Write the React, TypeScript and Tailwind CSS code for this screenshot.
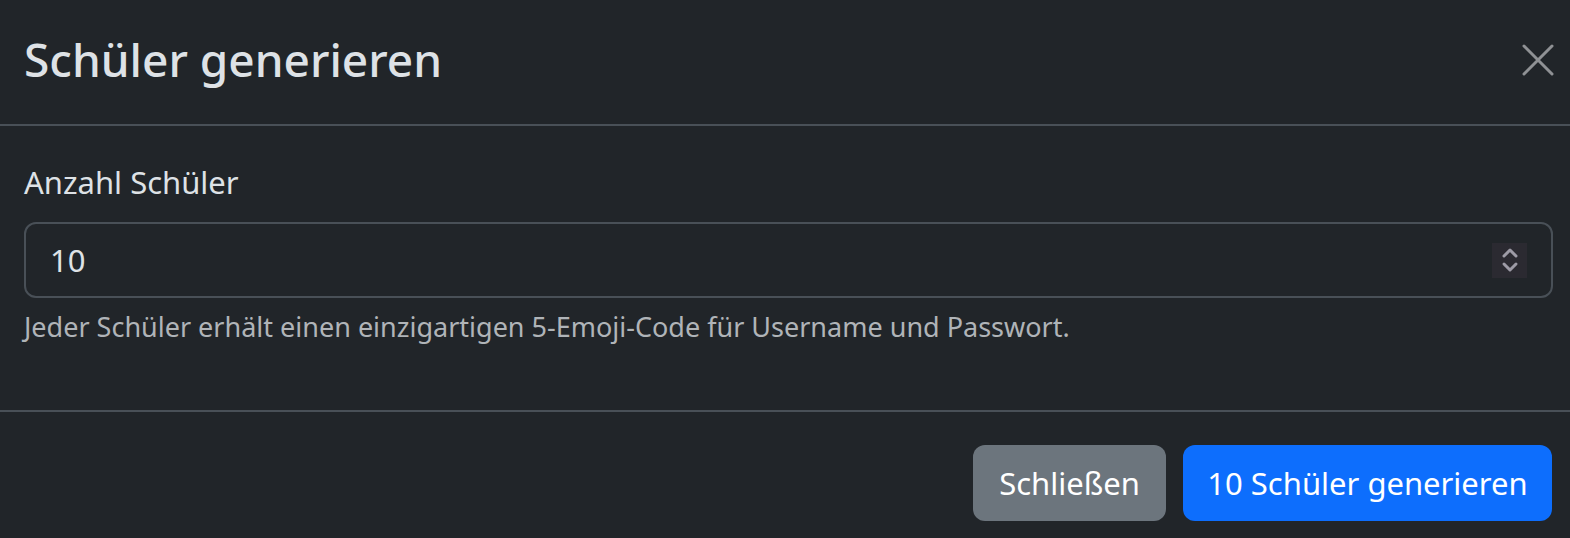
export default function App() {
  return (
    <div
      className="min-h-[538px] w-full bg-[#212529] text-[#dee2e6]"
      style={{ fontFamily: '"Noto Sans", "Open Sans", sans-serif' }}
    >
      {/* header */}
      <div className="flex h-[126px] items-center justify-between border-b-2 border-[#495057] pb-[6px] pl-[24px] pr-[16px]">
        <h1 className="text-[46px] leading-[60px] font-medium">Schüler generieren</h1>
        <button className="mt-[2px] flex h-[32px] w-[32px] items-center justify-center" aria-label="Close">
          <svg width="32" height="32" viewBox="0 0 32 32" fill="none" stroke="#8f9194" strokeWidth="3" strokeLinecap="round">
            <path d="M2 2L30 30M30 2L2 30" />
          </svg>
        </button>
      </div>

      {/* body */}
      <div className="pt-[32px] pb-[62px] pl-[24px] pr-[17px]">
        <label className="mb-[16px] block text-[31px] leading-[48px]">Anzahl Schüler</label>
        <div className="flex h-[76px] items-center rounded-[12px] border-2 border-[#495057] pl-[24px] pr-[24px]">
          <input
            type="text"
            readOnly
            value="10"
            className="min-w-0 flex-1 bg-transparent text-[31px] leading-[48px] text-[#dee2e6] outline-none"
          />
          <div className="flex h-[35px] w-[35px] flex-col items-center justify-center bg-[#2b2a31]">
            <svg width="20" height="28" viewBox="0 0 20 28" fill="none" stroke="#9d9ba6" strokeWidth="3" strokeLinecap="round" strokeLinejoin="round">
              <path d="M4 10L10 4L16 10" />
              <path d="M4 18L10 24L16 18" />
            </svg>
          </div>
        </div>
        <div className="mt-[8px] text-[27px] leading-[42px] text-[#b0b4b8]">
          Jeder Schüler erhält einen einzigartigen 5-Emoji-Code für Username und Passwort.
        </div>
      </div>

      {/* footer */}
      <div className="flex justify-end gap-[17px] border-t-2 border-[#495057] pt-[33px] pb-[17px] pl-[24px] pr-[18px]">
        <button className="h-[76px] w-[193px] rounded-[12px] bg-[#6c757d] text-[31px] leading-[48px] text-white">
          Schließen
        </button>
        <button className="h-[76px] w-[369px] rounded-[12px] bg-[#0d6efd] text-[31px] leading-[48px] text-white">
          10 Schüler generieren
        </button>
      </div>
    </div>
  );
}
